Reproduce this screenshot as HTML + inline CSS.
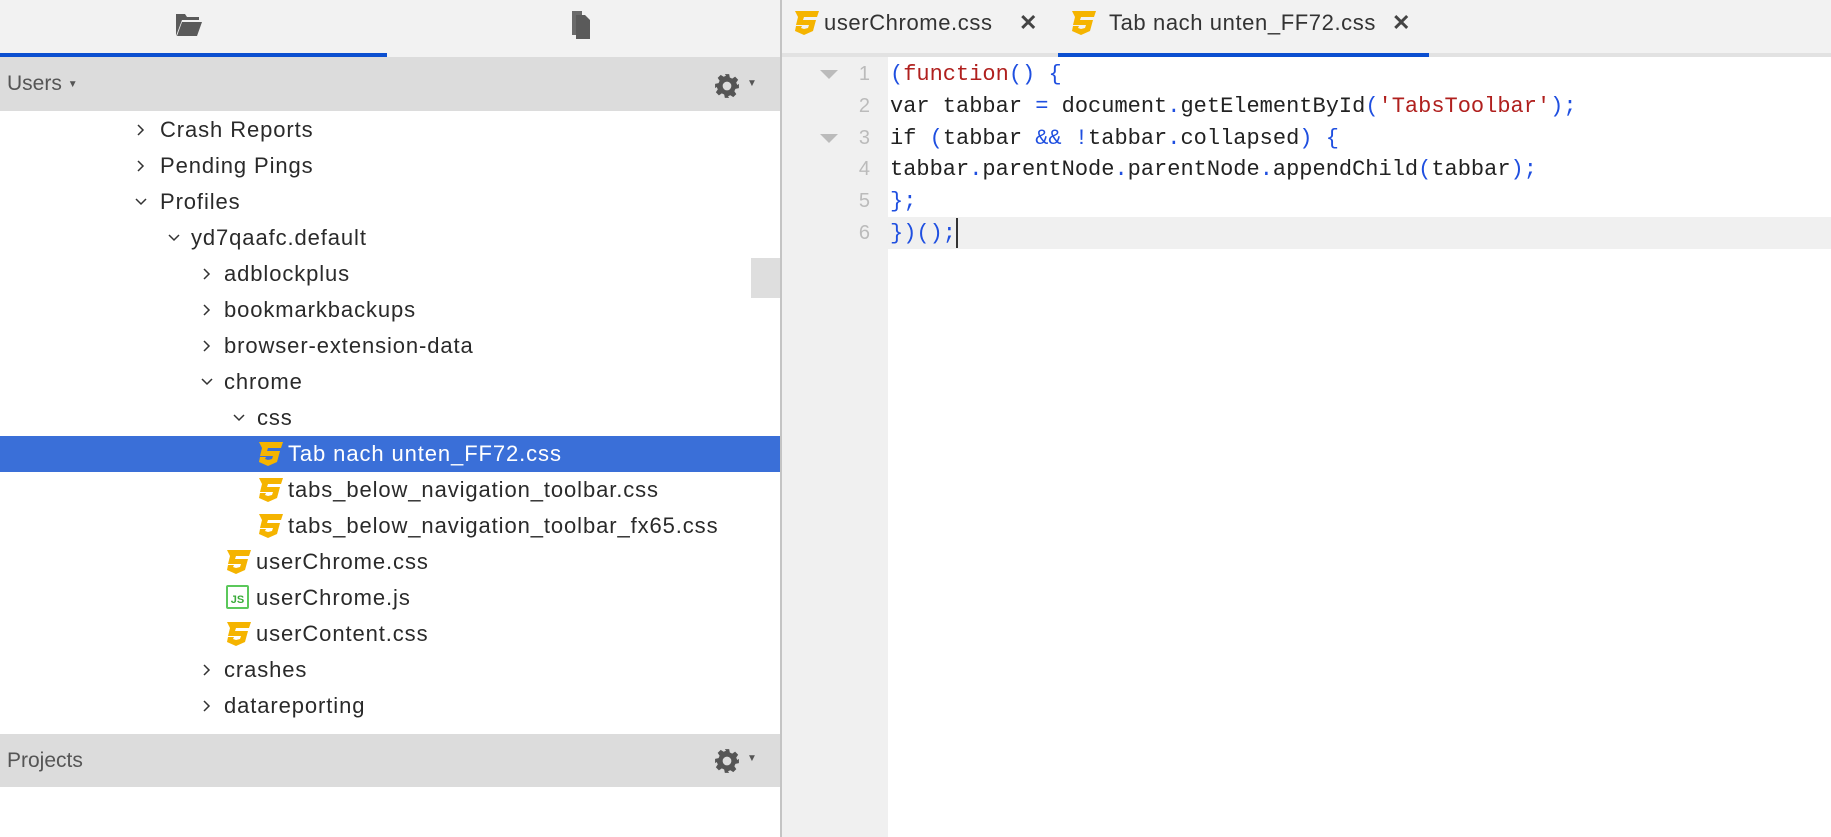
<!DOCTYPE html>
<html><head><meta charset="utf-8"><style>
*{margin:0;padding:0;box-sizing:border-box}
body{width:1831px;height:837px;overflow:hidden;background:#fff;font-family:"Liberation Sans",sans-serif;position:relative}
.abs{position:absolute}
.row{position:absolute;left:0;width:780px;height:36px;line-height:36px;font-size:22px;letter-spacing:0.9px;color:#2a2a2a;white-space:nowrap}
.row.sel{background:#3a6fd8;color:#fff}
.chev{position:absolute;top:12px}
.code{position:absolute;left:890px;font-family:"Liberation Mono",monospace;font-size:22px;color:#222;white-space:pre;height:31.8px;line-height:31.8px}
.ln{position:absolute;left:840px;width:30px;text-align:right;font-family:"Liberation Sans",sans-serif;font-size:20px;color:#bbb;height:31.8px;line-height:31.8px}
.b{color:#1f4fe0}.r{color:#b0201e}
.tri{position:absolute;left:820px;width:0;height:0;border-left:9px solid transparent;border-right:9px solid transparent;border-top:9px solid #bbb}
.tab{font-size:22px;letter-spacing:0.6px;color:#333;line-height:30px}
</style></head><body>
<svg width="0" height="0" style="position:absolute"><defs>
<symbol id="css" viewBox="0 0 28 26"><path d="M3 1h24l-2 6H12l-1 3h13l-3 11-9 4-9-4 1-5h6l-1 2 3 1 4-1 1-3H4l2-8z" fill="#f5b400"/></symbol>
<symbol id="r" viewBox="0 0 12 12"><path d="M3 1l5 5-5 5" fill="none" stroke="#333" stroke-width="1.5"/></symbol>
<symbol id="d" viewBox="0 0 12 12"><path d="M1 3l5 5 5-5" fill="none" stroke="#333" stroke-width="1.5"/></symbol>
<symbol id="gear" viewBox="0 0 24 24"><path fill="#555" d="M10 1h4l.6 3.2 2.2 1 2.7-1.8 2.8 2.8-1.8 2.7 1 2.2L23 10v4l-3.2.6-1 2.2 1.8 2.7-2.8 2.8-2.7-1.8-2.2 1L14 23h-4l-.6-3.2-2.2-1-2.7 1.8-2.8-2.8 1.8-2.7-1-2.2L1 14v-4l3.2-.6 1-2.2-1.8-2.7 2.8-2.8 2.7 1.8 2.2-1zM12 8a4 4 0 100 8 4 4 0 100-8z"/></symbol>
</defs></svg>
<div class="abs" style="left:0;top:0;width:780px;height:57px;background:#f2f2f2"></div>
<div class="abs" style="left:0;top:53px;width:387px;height:4px;background:#0b4fd0"></div>
<svg class="abs" style="left:174px;top:12px" width="30" height="26" viewBox="0 0 30 26"><path d="M2 2h9l2 3h12v3H8L2 24z" fill="#5a5a5a"/><path d="M8 10h20l-5 14H3z" fill="#5a5a5a"/></svg>
<svg class="abs" style="left:571px;top:10px" width="20" height="30" viewBox="0 0 20 30"><path d="M1 1h10v24H1z" fill="#6a6a6a"/><path d="M5 5h9l5 5v19H5z" fill="#5a5a5a"/></svg>
<div class="abs" style="left:0;top:57px;width:780px;height:54px;background:#dcdcdc"></div>
<div class="abs" style="left:7px;top:57px;line-height:54px;font-size:21px;color:#555">Users <span style="font-size:10px;vertical-align:3px">▼</span></div>
<svg class="abs" style="left:714px;top:73px" width="26" height="26"><use href="#gear"/></svg>
<div class="abs" style="left:747px;top:78px;font-size:10px;color:#555">▼</div>
<div class="row" style="top:112px"><svg class="chev" style="left:135px" width="12" height="12"><use href="#r"/></svg><span class="abs" style="left:160px">Crash Reports</span></div>
<div class="row" style="top:148px"><svg class="chev" style="left:135px" width="12" height="12"><use href="#r"/></svg><span class="abs" style="left:160px">Pending Pings</span></div>
<div class="row" style="top:184px"><svg class="chev" style="left:135px" width="12" height="12"><use href="#d"/></svg><span class="abs" style="left:160px">Profiles</span></div>
<div class="row" style="top:220px"><svg class="chev" style="left:168px" width="12" height="12"><use href="#d"/></svg><span class="abs" style="left:191px">yd7qaafc.default</span></div>
<div class="row" style="top:256px"><svg class="chev" style="left:201px" width="12" height="12"><use href="#r"/></svg><span class="abs" style="left:224px">adblockplus</span></div>
<div class="abs" style="left:751px;top:258px;width:29px;height:40px;background:#dedede"></div>
<div class="row" style="top:292px"><svg class="chev" style="left:201px" width="12" height="12"><use href="#r"/></svg><span class="abs" style="left:224px">bookmarkbackups</span></div>
<div class="row" style="top:328px"><svg class="chev" style="left:201px" width="12" height="12"><use href="#r"/></svg><span class="abs" style="left:224px">browser-extension-data</span></div>
<div class="row" style="top:364px"><svg class="chev" style="left:201px" width="12" height="12"><use href="#d"/></svg><span class="abs" style="left:224px">chrome</span></div>
<div class="row" style="top:400px"><svg class="chev" style="left:233px" width="12" height="12"><use href="#d"/></svg><span class="abs" style="left:257px">css</span></div>
<div class="row sel" style="top:436px"><span class="abs" style="left:288px">Tab nach unten_FF72.css</span></div>
<div class="row" style="top:472px"><span class="abs" style="left:288px">tabs_below_navigation_toolbar.css</span></div>
<div class="row" style="top:508px"><span class="abs" style="left:288px">tabs_below_navigation_toolbar_fx65.css</span></div>
<div class="row" style="top:544px"><span class="abs" style="left:256px">userChrome.css</span></div>
<div class="row" style="top:580px"><span class="abs" style="left:256px">userChrome.js</span></div>
<div class="row" style="top:616px"><span class="abs" style="left:256px">userContent.css</span></div>
<div class="row" style="top:652px"><svg class="chev" style="left:201px" width="12" height="12"><use href="#r"/></svg><span class="abs" style="left:224px">crashes</span></div>
<div class="row" style="top:688px"><svg class="chev" style="left:201px" width="12" height="12"><use href="#r"/></svg><span class="abs" style="left:224px">datareporting</span></div>
<svg class="abs" style="left:256px;top:441px" width="28" height="26"><use href="#css"/></svg>
<svg class="abs" style="left:256px;top:477px" width="28" height="26"><use href="#css"/></svg>
<svg class="abs" style="left:256px;top:513px" width="28" height="26"><use href="#css"/></svg>
<svg class="abs" style="left:224px;top:549px" width="28" height="26"><use href="#css"/></svg>
<svg class="abs" style="left:224px;top:621px" width="28" height="26"><use href="#css"/></svg>
<div class="abs" style="left:226px;top:585px;width:23px;height:24px;border:2px solid #5bc85b;border-radius:2px;font-size:11px;color:#3aab3a;font-weight:bold;text-align:center;line-height:26px">JS</div>
<div class="abs" style="left:0;top:734px;width:780px;height:53px;background:#dcdcdc"></div>
<div class="abs" style="left:7px;top:734px;line-height:53px;font-size:21px;color:#555">Projects</div>
<svg class="abs" style="left:714px;top:748px" width="26" height="26"><use href="#gear"/></svg>
<div class="abs" style="left:747px;top:753px;font-size:10px;color:#555">▼</div>
<div class="abs" style="left:780px;top:0;width:2px;height:837px;background:#c4c4c4"></div>
<div class="abs" style="left:782px;top:0;width:1049px;height:53px;background:#f2f2f2"></div>
<div class="abs" style="left:782px;top:53px;width:1049px;height:4px;background:#e2e2e2"></div>
<div class="abs" style="left:1058px;top:53px;width:371px;height:4px;background:#0b4fd0"></div>
<svg class="abs" style="left:792px;top:10px" width="28" height="26"><use href="#css"/></svg>
<div class="abs tab" style="left:824px;top:8px">userChrome.css</div>
<div class="abs" style="left:1019px;top:8px;font-size:22px;color:#444;line-height:30px;font-weight:bold">✕</div>
<svg class="abs" style="left:1069px;top:10px" width="28" height="26"><use href="#css"/></svg>
<div class="abs tab" style="left:1109px;top:8px">Tab nach unten_FF72.css</div>
<div class="abs" style="left:1392px;top:8px;font-size:22px;color:#444;line-height:30px;font-weight:bold">✕</div>
<div class="abs" style="left:782px;top:57px;width:106px;height:780px;background:#f0f0f0"></div>
<div class="abs" style="left:888px;top:217px;width:943px;height:32px;background:#f0f0f0"></div>
<div class="tri" style="top:70px"></div>
<div class="tri" style="top:134px"></div>
<div class="ln" style="top:59px">1</div><div class="ln" style="top:90.8px">2</div><div class="ln" style="top:122.6px">3</div><div class="ln" style="top:154.4px">4</div><div class="ln" style="top:186.2px">5</div><div class="ln" style="top:218px">6</div>
<div class="code" style="top:59px"><span class="b">(</span><span class="r">function</span><span class="b">()</span> <span class="b">{</span></div>
<div class="code" style="top:90.8px">var tabbar <span class="b">=</span> document<span class="b">.</span>getElementById<span class="b">(</span><span class="r">'TabsToolbar'</span><span class="b">);</span></div>
<div class="code" style="top:122.6px">if <span class="b">(</span>tabbar <span class="b">&amp;&amp;</span> <span class="b">!</span>tabbar<span class="b">.</span>collapsed<span class="b">)</span> <span class="b">{</span></div>
<div class="code" style="top:154.4px">tabbar<span class="b">.</span>parentNode<span class="b">.</span>parentNode<span class="b">.</span>appendChild<span class="b">(</span>tabbar<span class="b">);</span></div>
<div class="code" style="top:186.2px"><span class="b">};</span></div>
<div class="code" style="top:218px"><span class="b">})();</span></div>
<div class="abs" style="left:956px;top:218px;width:2px;height:30px;background:#333"></div>
</body></html>
